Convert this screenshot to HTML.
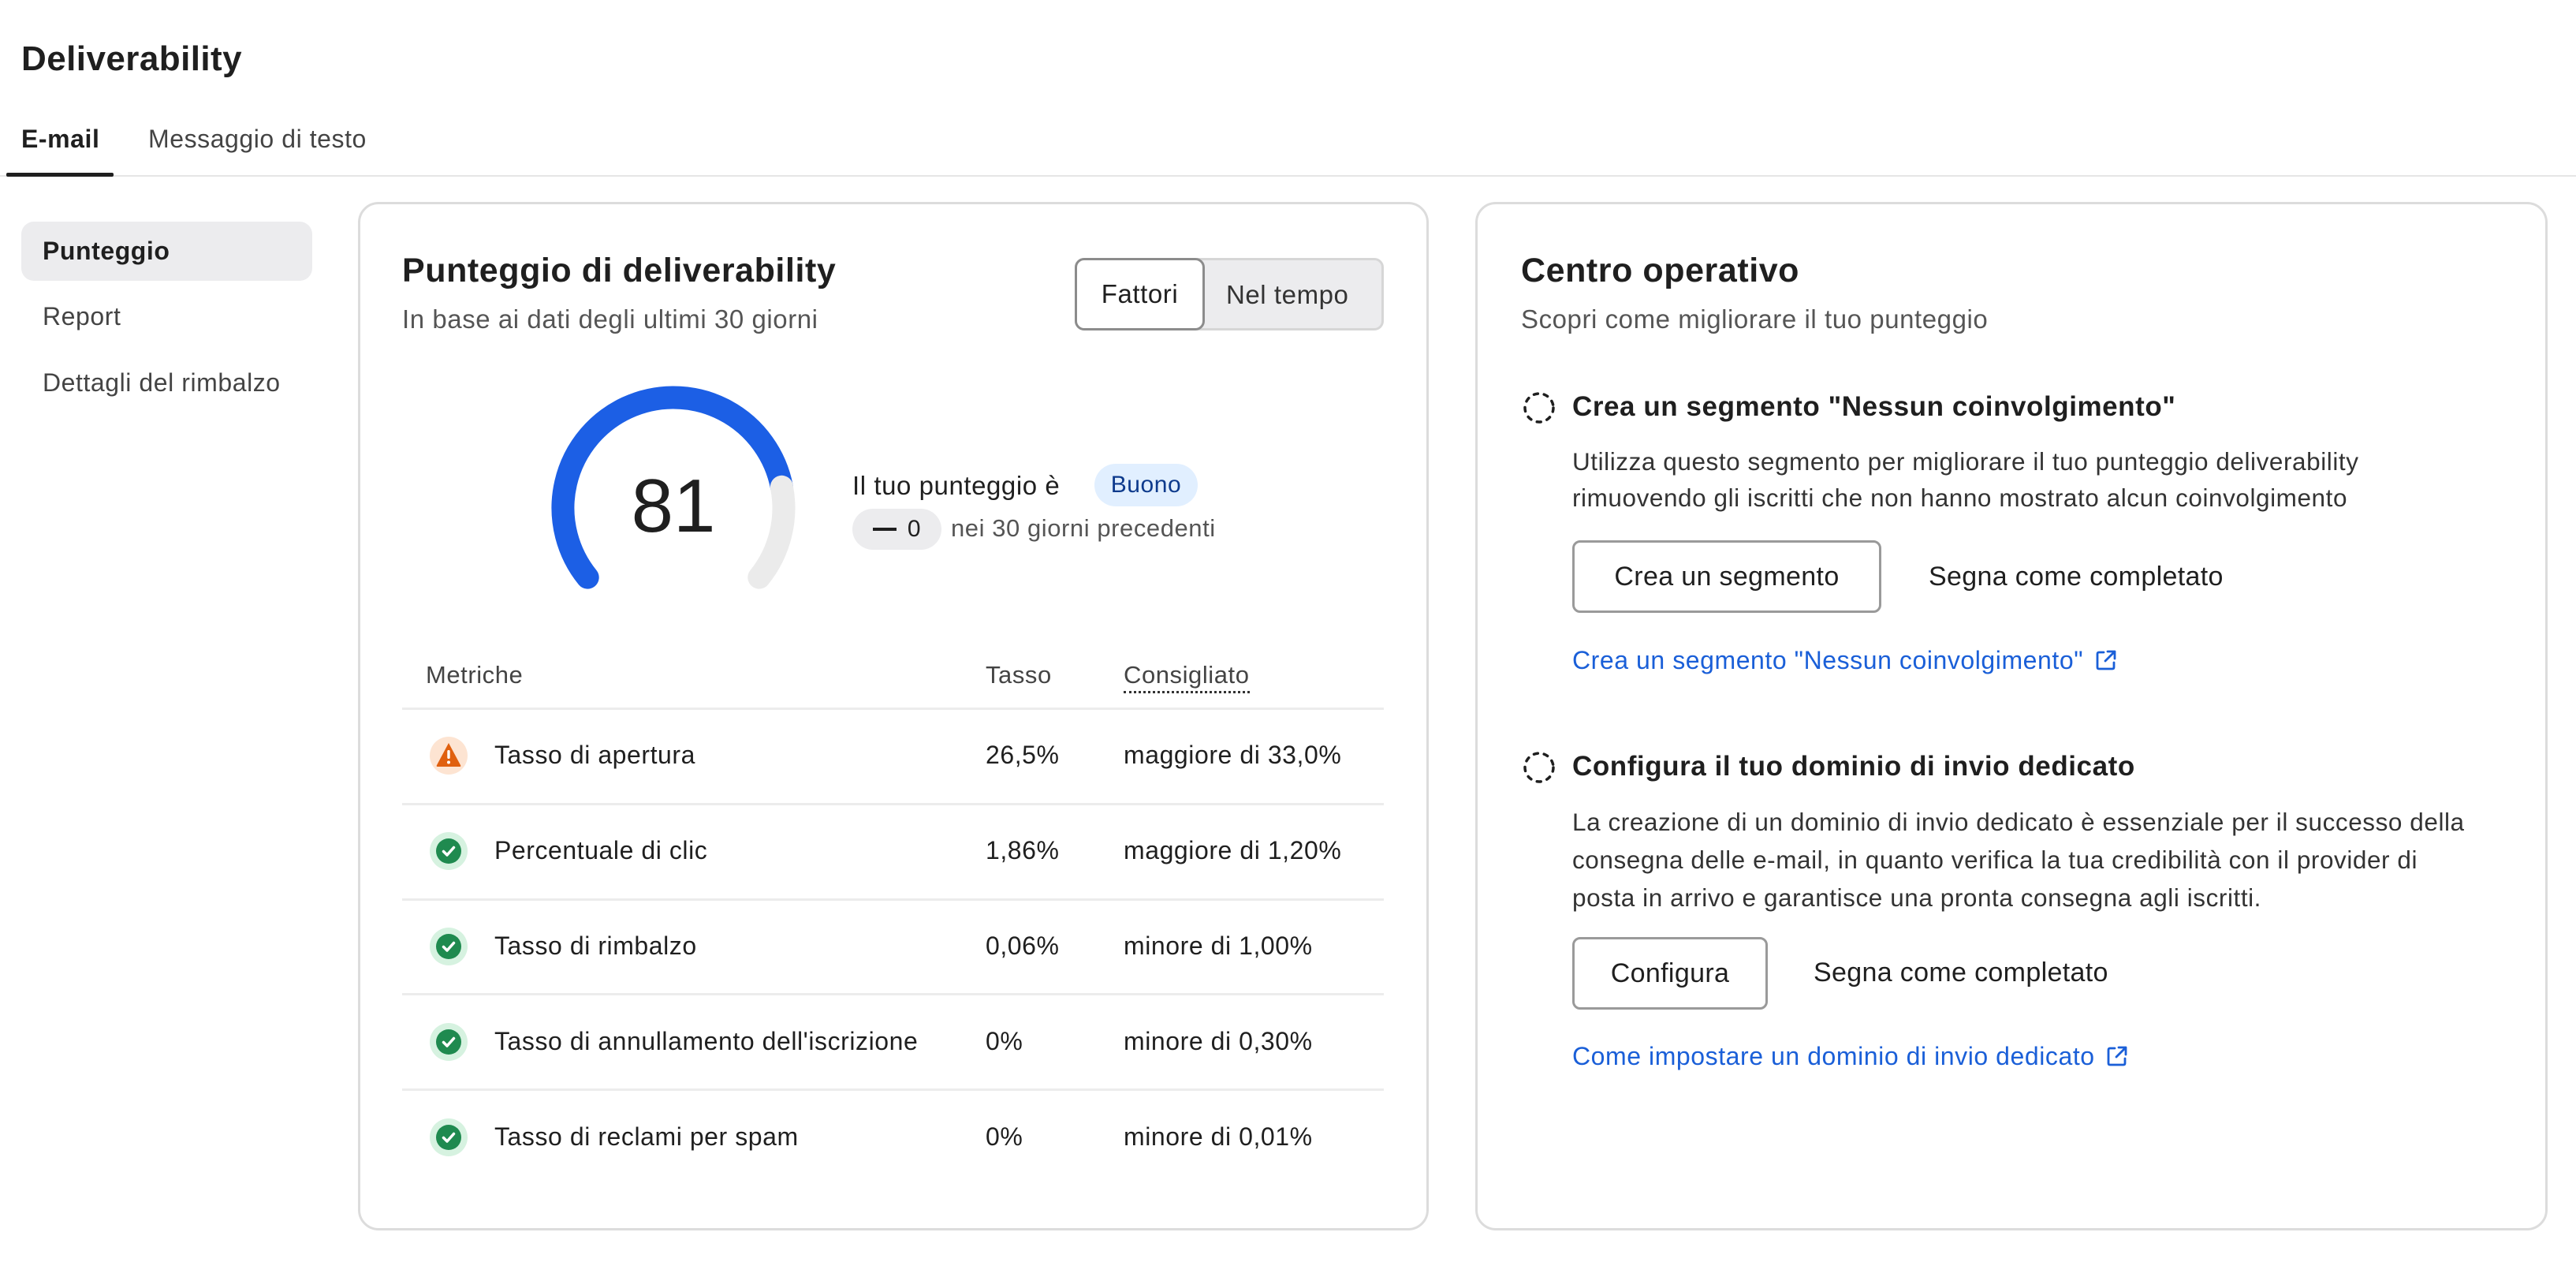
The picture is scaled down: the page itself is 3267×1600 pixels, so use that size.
<!DOCTYPE html>
<html><head><meta charset="utf-8">
<style>
*{margin:0;padding:0;box-sizing:border-box}
body{width:3267px;height:1600px;background:#fff;font-family:"Liberation Sans",Arial,sans-serif;color:#1f1f1f;position:relative;overflow:hidden;letter-spacing:0.035em}
.t{position:absolute;white-space:nowrap;line-height:1}
.card{position:absolute;border:3px solid #dcdcdc;border-radius:26px;background:#fff}
.hl{position:absolute;height:3px;background:#ececec;left:510px;width:1245px}
.ic{position:absolute;width:48px;height:48px;border-radius:50%}
.ok{background:#d6f2e0}
.ok::after{content:"";position:absolute;left:8px;top:8px;width:32px;height:32px;border-radius:50%;background:#1f8a4f}
.ok svg{position:absolute;left:8px;top:8px;z-index:2}
.btn{position:absolute;border:3px solid #9a9a9a;border-radius:10px;background:#fff;font-size:34px;display:flex;align-items:center;justify-content:center;letter-spacing:0.01em}
.link{color:#1a5fd8;font-size:32px}
</style></head><body>

<div class="t" style="left:27px;top:53px;font-size:44px;font-weight:700;letter-spacing:0.01em">Deliverability</div>
<div class="t" style="left:27px;top:160px;font-size:32px;font-weight:700">E-mail</div>
<div class="t" style="left:188px;top:160px;font-size:32px;color:#444">Messaggio di testo</div>
<div style="position:absolute;left:0;top:222px;width:3267px;height:2px;background:#e6e6e6"></div>
<div style="position:absolute;left:8px;top:219px;width:136px;height:5px;background:#1f1f1f;border-radius:2px"></div>

<div style="position:absolute;left:27px;top:281px;width:369px;height:75px;background:#ececee;border-radius:16px"></div>
<div class="t" style="left:54px;top:302px;font-size:32px;font-weight:700">Punteggio</div>
<div class="t" style="left:54px;top:385px;font-size:32px;color:#444">Report</div>
<div class="t" style="left:54px;top:469px;font-size:32px;color:#444">Dettagli del rimbalzo</div>

<div class="card" style="left:454px;top:256px;width:1358px;height:1304px"></div>
<div class="t" style="left:510px;top:322px;font-size:43px;font-weight:700">Punteggio di deliverability</div>
<div class="t" style="left:510px;top:388px;font-size:33px;color:#555">In base ai dati degli ultimi 30 giorni</div>

<div style="position:absolute;left:1363px;top:327px;width:392px;height:92px;border-radius:12px;background:#ececee;border:3px solid #d6d6d6"></div>
<div style="position:absolute;left:1363px;top:327px;width:165px;height:92px;border-radius:12px;background:#fff;border:3px solid #8c8c8c;display:flex;align-items:center;justify-content:center;font-size:33px">Fattori</div>
<div class="t" style="left:1555px;top:357px;font-size:33px;color:#333">Nel tempo</div>

<svg style="position:absolute;left:0;top:0" width="1300" height="900">
<path d="M745.2 732.1 A140 140 0 1 1 991.4 617.3" fill="none" stroke="#1c5fe5" stroke-width="29" stroke-linecap="round"/>
<path d="M991.4 617.3 A140 140 0 0 1 962.8 732.1" fill="none" stroke="#ebebeb" stroke-width="29" stroke-linecap="round"/>
</svg>
<div class="t" style="left:754px;top:594px;width:200px;text-align:center;font-size:96px;letter-spacing:0">81</div>
<div class="t" style="left:1081px;top:599px;font-size:33px">Il tuo punteggio è</div>
<div style="position:absolute;left:1388px;top:588px;width:131px;height:54px;border-radius:27px;background:#e1efff;color:#0d3a8c;font-size:30px;display:flex;align-items:center;justify-content:center">Buono</div>
<div style="position:absolute;left:1081px;top:645px;width:113px;height:52px;border-radius:26px;background:#ececee;font-size:30px;display:flex;align-items:center;justify-content:center"><span style="display:inline-block;width:30px;height:4px;background:#1f1f1f;margin-right:14px"></span>0</div>
<div class="t" style="left:1206px;top:654px;font-size:31px;color:#555">nei 30 giorni precedenti</div>

<div class="t" style="left:540px;top:840px;font-size:31px;color:#444">Metriche</div>
<div class="t" style="left:1250px;top:840px;font-size:31px;color:#444">Tasso</div>
<div class="t" style="left:1425px;top:840px;font-size:31px;color:#444;border-bottom:3px dotted #333;padding-bottom:5px">Consigliato</div>

<div class="hl" style="top:897px"></div>
<div class="hl" style="top:1018px"></div>
<div class="hl" style="top:1139px"></div>
<div class="hl" style="top:1259px"></div>
<div class="hl" style="top:1380px"></div>

<div class="ic" style="left:545px;top:934px;background:#fde4d2">
<svg width="48" height="48" viewBox="0 0 48 48"><path d="M24 8 L39 36 Q40 38 38 38 L10 38 Q8 38 9 36 Z" fill="#e0600f"/><rect x="22.3" y="17" width="3.4" height="11" rx="1.5" fill="#fff"/><circle cx="24" cy="32.5" r="2" fill="#fff"/></svg></div>
<div class="ic ok" style="left:545px;top:1055px"><svg width="32" height="32" viewBox="0 0 32 32"><path d="M9.5 16.5 L14 21 L22.5 11.5" fill="none" stroke="#fff" stroke-width="3.5" stroke-linecap="round" stroke-linejoin="round"/></svg></div>
<div class="ic ok" style="left:545px;top:1176px"><svg width="32" height="32" viewBox="0 0 32 32"><path d="M9.5 16.5 L14 21 L22.5 11.5" fill="none" stroke="#fff" stroke-width="3.5" stroke-linecap="round" stroke-linejoin="round"/></svg></div>
<div class="ic ok" style="left:545px;top:1297px"><svg width="32" height="32" viewBox="0 0 32 32"><path d="M9.5 16.5 L14 21 L22.5 11.5" fill="none" stroke="#fff" stroke-width="3.5" stroke-linecap="round" stroke-linejoin="round"/></svg></div>
<div class="ic ok" style="left:545px;top:1418px"><svg width="32" height="32" viewBox="0 0 32 32"><path d="M9.5 16.5 L14 21 L22.5 11.5" fill="none" stroke="#fff" stroke-width="3.5" stroke-linecap="round" stroke-linejoin="round"/></svg></div>

<div class="t" style="left:627px;top:941px;font-size:32px">Tasso di apertura</div>
<div class="t" style="left:1250px;top:941px;font-size:32px">26,5%</div>
<div class="t" style="left:1425px;top:941px;font-size:32px">maggiore di 33,0%</div>
<div class="t" style="left:627px;top:1062px;font-size:32px">Percentuale di clic</div>
<div class="t" style="left:1250px;top:1062px;font-size:32px">1,86%</div>
<div class="t" style="left:1425px;top:1062px;font-size:32px">maggiore di 1,20%</div>
<div class="t" style="left:627px;top:1183px;font-size:32px">Tasso di rimbalzo</div>
<div class="t" style="left:1250px;top:1183px;font-size:32px">0,06%</div>
<div class="t" style="left:1425px;top:1183px;font-size:32px">minore di 1,00%</div>
<div class="t" style="left:627px;top:1304px;font-size:32px">Tasso di annullamento dell'iscrizione</div>
<div class="t" style="left:1250px;top:1304px;font-size:32px">0%</div>
<div class="t" style="left:1425px;top:1304px;font-size:32px">minore di 0,30%</div>
<div class="t" style="left:627px;top:1425px;font-size:32px">Tasso di reclami per spam</div>
<div class="t" style="left:1250px;top:1425px;font-size:32px">0%</div>
<div class="t" style="left:1425px;top:1425px;font-size:32px">minore di 0,01%</div>

<div class="card" style="left:1871px;top:256px;width:1360px;height:1304px"></div>
<div class="t" style="left:1929px;top:322px;font-size:43px;font-weight:700">Centro operativo</div>
<div class="t" style="left:1929px;top:388px;font-size:33px;color:#555">Scopri come migliorare il tuo punteggio</div>

<svg style="position:absolute;left:1931px;top:496px" width="42" height="42"><circle cx="21" cy="21" r="18" fill="none" stroke="#1f1f1f" stroke-width="3.5" stroke-dasharray="5 8" stroke-linecap="round"/></svg>
<div class="t" style="left:1994px;top:498px;font-size:35px;font-weight:700">Crea un segmento "Nessun coinvolgimento"</div>
<div class="t" style="left:1994px;top:562px;font-size:31.5px;line-height:46px;color:#333">Utilizza questo segmento per migliorare il tuo punteggio deliverability<br>rimuovendo gli iscritti che non hanno mostrato alcun coinvolgimento</div>
<div class="btn" style="left:1994px;top:685px;width:392px;height:92px">Crea un segmento</div>
<div class="t" style="left:2446px;top:714px;font-size:34px;letter-spacing:0.01em">Segna come completato</div>
<div class="t link" style="left:1994px;top:821px">Crea un segmento "Nessun coinvolgimento" <svg width="30" height="30" viewBox="0 0 30 30" style="vertical-align:-4px;margin-left:4px"><path d="M12 5 H6 Q4 5 4 7 V24 Q4 26 6 26 H23 Q25 26 25 24 V18 M17 4 H26 V13 M26 4 L14 16" fill="none" stroke="#1a5fd8" stroke-width="2.8" stroke-linecap="round" stroke-linejoin="round"/></svg></div>

<svg style="position:absolute;left:1931px;top:952px" width="42" height="42"><circle cx="21" cy="21" r="18" fill="none" stroke="#1f1f1f" stroke-width="3.5" stroke-dasharray="5 8" stroke-linecap="round"/></svg>
<div class="t" style="left:1994px;top:954px;font-size:35px;font-weight:700">Configura il tuo dominio di invio dedicato</div>
<div class="t" style="left:1994px;top:1018px;font-size:31.5px;line-height:48px;color:#333">La creazione di un dominio di invio dedicato è essenziale per il successo della<br>consegna delle e-mail, in quanto verifica la tua credibilità con il provider di<br>posta in arrivo e garantisce una pronta consegna agli iscritti.</div>
<div class="btn" style="left:1994px;top:1188px;width:248px;height:92px">Configura</div>
<div class="t" style="left:2300px;top:1216px;font-size:34px;letter-spacing:0.01em">Segna come completato</div>
<div class="t link" style="left:1994px;top:1323px">Come impostare un dominio di invio dedicato <svg width="30" height="30" viewBox="0 0 30 30" style="vertical-align:-4px;margin-left:4px"><path d="M12 5 H6 Q4 5 4 7 V24 Q4 26 6 26 H23 Q25 26 25 24 V18 M17 4 H26 V13 M26 4 L14 16" fill="none" stroke="#1a5fd8" stroke-width="2.8" stroke-linecap="round" stroke-linejoin="round"/></svg></div>

</body></html>
